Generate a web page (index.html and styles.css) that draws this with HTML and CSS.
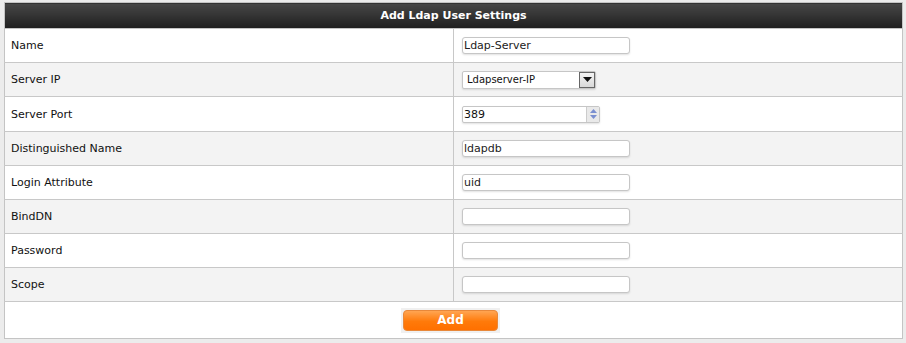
FILE: index.html
```html
<!DOCTYPE html>
<html lang="en">
<head>
    <meta charset="UTF-8">
    <title>Add Ldap User Settings</title>
    <link rel="stylesheet" href="styles.css">
</head>
<body>
    <table class="settings">
        <tr>
            <th colspan="2">Add Ldap User Settings</th>
        </tr>
        <tr>
            <td class="label">Name</td>
            <td><input type="text" class="field" value="Ldap-Server"></td>
        </tr>
        <tr class="alt">
            <td class="label">Server IP</td>
            <td>
                <div class="select">
                    <span>Ldapserver-IP</span>
                    <span class="arrow"><svg width="9" height="5" viewBox="0 0 9 5"><path d="M0 0h9L4.5 5z" fill="#111"/></svg></span>
                </div>
            </td>
        </tr>
        <tr class="tall">
            <td class="label">Server Port</td>
            <td>
                <div class="number">
                    <span>389</span>
                    <span class="spin">
                        <svg width="9" height="12" viewBox="0 0 9 12"><path d="M1 5h7L4.5 1z" fill="#7a8fd0"/><path d="M1 7h7L4.5 11z" fill="#7a8fd0"/></svg>
                    </span>
                </div>
            </td>
        </tr>
        <tr class="alt">
            <td class="label">Distinguished Name</td>
            <td><input type="text" class="field" value="ldapdb"></td>
        </tr>
        <tr>
            <td class="label">Login Attribute</td>
            <td><input type="text" class="field" value="uid"></td>
        </tr>
        <tr class="alt">
            <td class="label">BindDN</td>
            <td><input type="text" class="field" value=""></td>
        </tr>
        <tr>
            <td class="label">Password</td>
            <td><input type="password" class="field" value=""></td>
        </tr>
        <tr class="alt">
            <td class="label">Scope</td>
            <td><input type="text" class="field" value=""></td>
        </tr>
        <tr>
            <td colspan="2" class="actions">
                <span class="btn-wrap"><button class="btn">Add</button></span>
            </td>
        </tr>
    </table>
</body>
</html>
```

FILE: styles.css
```css
* {
    margin: 0;
    padding: 0;
    box-sizing: border-box;
}

body {
    background: #ececec;
    font-family: "DejaVu Sans", Verdana, sans-serif;
    font-size: 11px;
    color: #111;
    padding: 2px 3px 0 4px;
}

.settings {
    width: 899px;
    border-collapse: collapse;
    background: #fff;
    border: 1px solid #c4c4c4;
}

.settings th {
    height: 26px;
    background: linear-gradient(#474747, #1f1f1f);
    color: #fff;
    font-size: 11px;
    font-weight: bold;
    text-align: center;
    border-bottom: 1px solid #c4c4c4;
}

.settings td {
    height: 34px;
    border-bottom: 1px solid #c8c8c8;
    padding: 0 8px;
    vertical-align: middle;
}

.settings tr.tall td {
    height: 35px;
}

.settings td.label {
    width: 449px;
    padding-left: 6px;
    border-right: 1px solid #c8c8c8;
}

.settings tr.alt td {
    background: #f3f3f3;
}

.field {
    display: block;
    width: 168px;
    height: 17px;
    border: 1px solid #c6c6c6;
    border-radius: 3px;
    box-shadow: 0 1px 2px rgba(0, 0, 0, 0.12);
    background: #fff;
    font-family: "DejaVu Sans", Verdana, sans-serif;
    font-size: 11px;
    color: #222;
    padding: 0 1px;
    outline: none;
}

.select {
    display: flex;
    align-items: center;
    justify-content: space-between;
    width: 134px;
    height: 18px;
    border: 1px solid #c6c6c6;
    border-radius: 2px;
    background: #fff;
    box-shadow: 0 1px 2px rgba(0, 0, 0, 0.12);
    padding-left: 4px;
    font-size: 10px;
}

.select .arrow {
    display: flex;
    align-items: center;
    justify-content: center;
    width: 16px;
    height: 16px;
    border: 1px solid #666;
    background: linear-gradient(#f4f4f4, #d8d8d8);
}

.number {
    display: flex;
    align-items: center;
    justify-content: space-between;
    width: 138px;
    height: 17px;
    border: 1px solid #c6c6c6;
    border-radius: 2px;
    background: #fff;
    box-shadow: 0 1px 2px rgba(0, 0, 0, 0.12);
    padding-left: 1px;
}

.number .spin {
    display: flex;
    align-items: center;
    justify-content: center;
    width: 13px;
    height: 15px;
    border-left: 1px solid #ccc;
    background: #e9e9e9;
}

.settings td.actions {
    height: 37px;
    text-align: center;
    border-bottom: 0;
    padding-right: 14px;
}

.btn-wrap {
    display: inline-block;
    padding: 2px;
    background: #f0f0f0;
}

.btn {
    display: block;
    width: 95px;
    height: 21px;
    border: 1px solid #e8883a;
    border-radius: 4px;
    background: linear-gradient(#ffa552, #ff7a0a 55%, #ff7000);
    color: #fff;
    font-family: "DejaVu Sans", Verdana, sans-serif;
    font-size: 12px;
    font-weight: bold;
}
```
